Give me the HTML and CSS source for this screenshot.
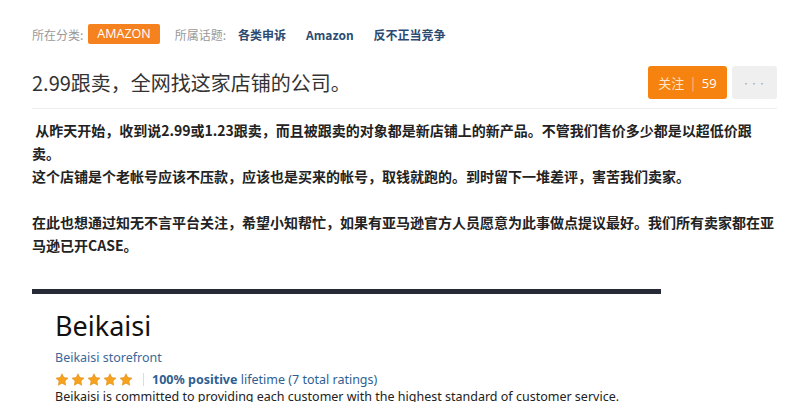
FILE: index.html
```html
<!DOCTYPE html>
<html lang="zh-CN">
<head>
    <meta charset="UTF-8">
    <title>2.99跟卖，全网找这家店铺的公司。</title>
    <link rel="stylesheet" href="styles.css">
</head>
<body>
    <div class="page">
        <div class="meta">
            <span class="meta-label">所在分类:</span>
            <span class="badge">AMAZON</span>
            <span class="meta-label topic-label">所属话题:</span>
            <a class="topic">各类申诉</a>
            <a class="topic">Amazon</a>
            <a class="topic">反不正当竞争</a>
        </div>

        <div class="head">
            <h1>2.99跟卖，全网找这家店铺的公司。</h1>
            <div class="actions">
                <button class="follow">关注<span class="sep">|</span><b>59</b></button>
                <button class="more">•••</button>
            </div>
        </div>

        <div class="post">
            <p>&nbsp;从昨天开始，收到说2.99或1.23跟卖，而且被跟卖的对象都是新店铺上的新产品。不管我们售价多少都是以超低价跟卖。<br>这个店铺是个老帐号应该不压款，应该也是买来的帐号，取钱就跑的。到时留下一堆差评，害苦我们卖家。</p>
            <p>在此也想通过知无不言平台关注，希望小知帮忙，如果有亚马逊官方人员愿意为此事做点提议最好。我们所有卖家都在亚马逊已开CASE。</p>
        </div>

        <div class="shot">
            <div class="shot-bar"></div>
            <div class="shot-body">
                <h2>Beikaisi</h2>
                <a class="store">Beikaisi storefront</a>
                <div class="rating">
                    <span class="stars">
                        <svg viewBox="0 0 16 15"><path d="M8 .8l2.1 4.5 4.9.6-3.6 3.4.9 4.9L8 11.8l-4.3 2.4.9-4.9L1 5.9l4.9-.6z"/></svg>
                        <svg viewBox="0 0 16 15"><path d="M8 .8l2.1 4.5 4.9.6-3.6 3.4.9 4.9L8 11.8l-4.3 2.4.9-4.9L1 5.9l4.9-.6z"/></svg>
                        <svg viewBox="0 0 16 15"><path d="M8 .8l2.1 4.5 4.9.6-3.6 3.4.9 4.9L8 11.8l-4.3 2.4.9-4.9L1 5.9l4.9-.6z"/></svg>
                        <svg viewBox="0 0 16 15"><path d="M8 .8l2.1 4.5 4.9.6-3.6 3.4.9 4.9L8 11.8l-4.3 2.4.9-4.9L1 5.9l4.9-.6z"/></svg>
                        <svg viewBox="0 0 16 15"><path d="M8 .8l2.1 4.5 4.9.6-3.6 3.4.9 4.9L8 11.8l-4.3 2.4.9-4.9L1 5.9l4.9-.6z"/></svg>
                    </span>
                    <span class="rating-text"><b>100% positive</b> lifetime (7 total ratings)</span>
                </div>
                <p class="desc">Beikaisi is committed to providing each customer with the highest standard of customer service.</p>
            </div>
        </div>
    </div>
</body>
</html>
```

FILE: styles.css
```css
body {
    margin: 0;
    background: #fff;
    font-family: "Noto Sans CJK SC", "Noto Sans", sans-serif;
    color: #222;
}

.page {
    width: 745px;
    padding: 24px 14px 0 32px;
}

.meta {
    display: flex;
    align-items: center;
    height: 20px;
    font-size: 12px;
}

.meta-label {
    color: #999;
}

.badge {
    margin-left: 5px;
    height: 20px;
    line-height: 20px;
    padding: 0 9px;
    background: #f5821f;
    color: #fff;
    font-family: "Open Sans", "Noto Sans", sans-serif;
    font-size: 12.5px;
    border-radius: 2px;
}

.topic-label {
    margin-left: 15px;
}

.topic {
    margin-left: 12px;
    color: #2c4b72;
    font-weight: 700;
}

.topic + .topic {
    margin-left: 20px;
}

.head {
    display: flex;
    justify-content: space-between;
    align-items: center;
    margin-top: 22px;
    padding-bottom: 9px;
    border-bottom: 1px solid #eee;
}

h1 {
    margin: 0;
    font-size: 20px;
    font-weight: 400;
    color: #333;
}

.actions {
    display: flex;
    gap: 5px;
}

.actions button {
    height: 33px;
    border: none;
    border-radius: 3px;
    font-family: inherit;
    cursor: pointer;
}

.follow {
    width: 79px;
    background: #f6820f;
    color: #fde5cc;
    font-size: 13px;
}

.follow b {
    color: #fff;
    font-weight: 400;
    font-family: "Open Sans", sans-serif;
}

.sep {
    margin: 0 7px;
    color: #fbc28a;
}

.more {
    width: 45px;
    background: #efefef;
    color: #999;
    font-size: 7px;
    letter-spacing: 1px;
}

.post {
    margin-top: 10px;
    font-size: 14px;
    font-weight: 700;
    line-height: 23px;
    color: #222;
}

.post p {
    margin: 0 0 23px;
}

.post p:last-child {
    margin-bottom: 0;
}

.shot {
    margin-top: 32px;
    width: 629px;
}

.shot-bar {
    height: 5px;
    background: #262a36;
}

.shot-body {
    padding-left: 23px;
    font-family: "Noto Sans", sans-serif;
    font-size: 12.5px;
}

h2 {
    margin: 14px 0 0;
    font-size: 27px;
    font-weight: 400;
    line-height: 36px;
    color: #111;
}

.store {
    display: block;
    margin-top: 5px;
    color: #3a689a;
    line-height: 18px;
}

.rating {
    display: flex;
    align-items: center;
    height: 20px;
    margin-top: 2px;
}

.stars {
    display: flex;
    gap: 2px;
    padding-right: 10px;
    margin-right: 8px;
    border-right: 1px solid #ddd;
    height: 13px;
}

.stars svg {
    width: 14px;
    height: 13px;
    fill: #f7a21c;
    stroke: #d98a14;
    stroke-width: .6;
}

.rating-text {
    color: #2f5f92;
}

.desc {
    margin: -1px 0 0;
    line-height: 18px;
    color: #222;
}
```
